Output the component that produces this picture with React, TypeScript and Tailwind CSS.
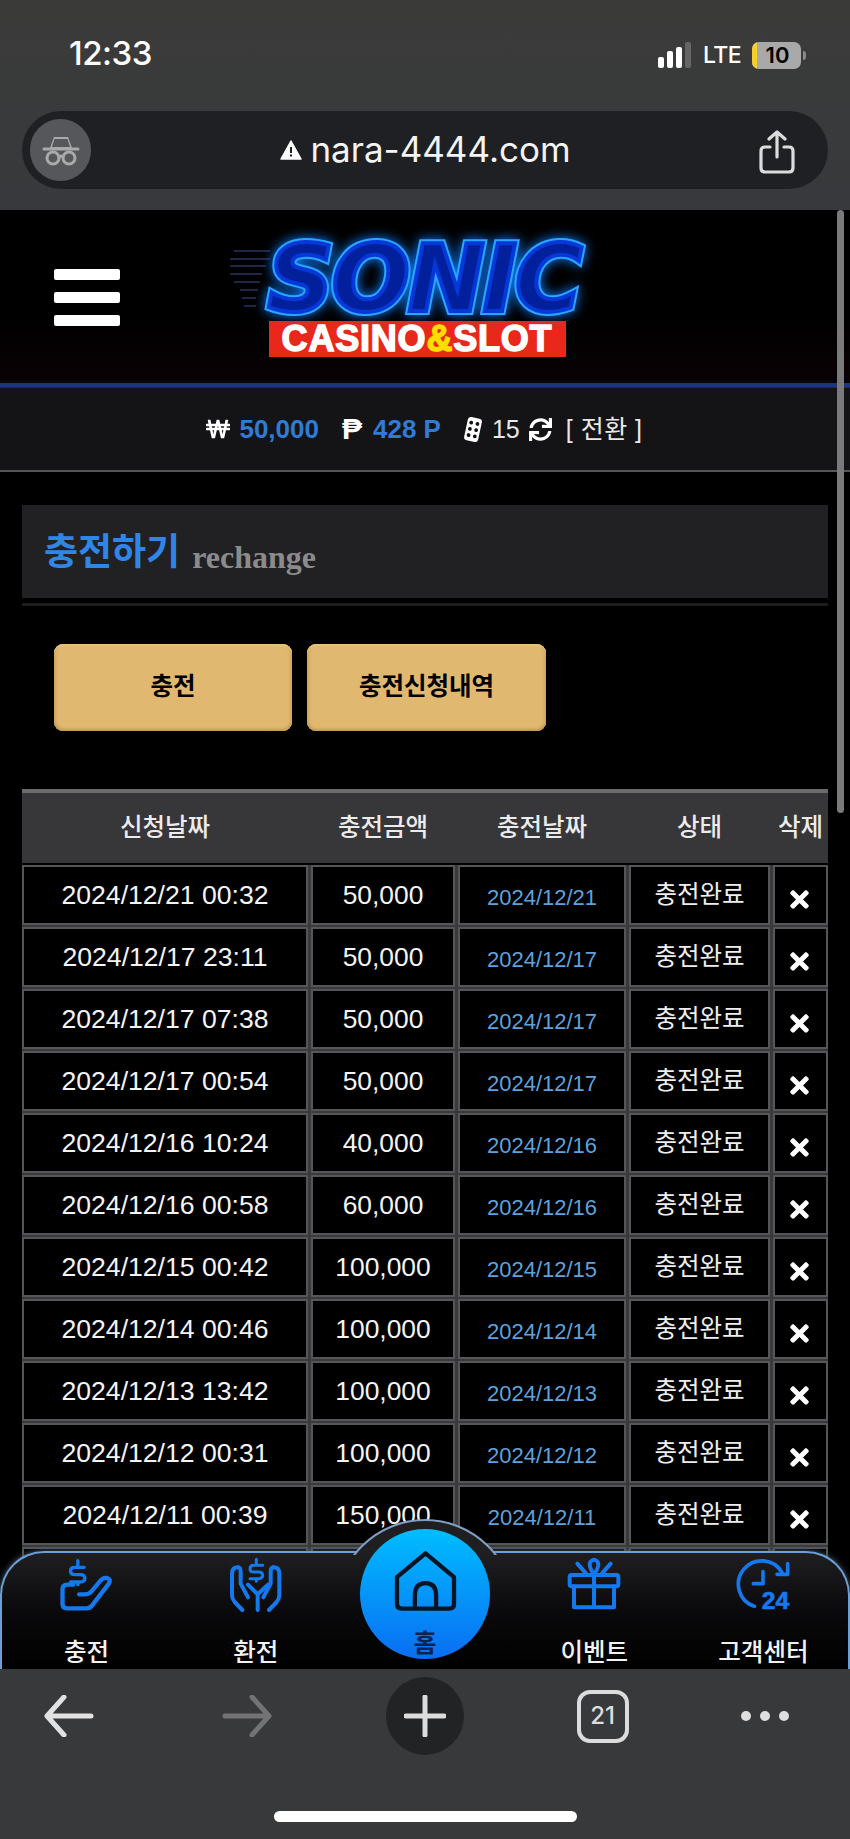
import React from "react";
import { FaTimes, FaWonSign, FaSync } from "react-icons/fa";

const rows: [string, string, string][] = [
  ["2024/12/21 00:32", "50,000", "2024/12/21"],
  ["2024/12/17 23:11", "50,000", "2024/12/17"],
  ["2024/12/17 07:38", "50,000", "2024/12/17"],
  ["2024/12/17 00:54", "50,000", "2024/12/17"],
  ["2024/12/16 10:24", "40,000", "2024/12/16"],
  ["2024/12/16 00:58", "60,000", "2024/12/16"],
  ["2024/12/15 00:42", "100,000", "2024/12/15"],
  ["2024/12/14 00:46", "100,000", "2024/12/14"],
  ["2024/12/13 13:42", "100,000", "2024/12/13"],
  ["2024/12/12 00:31", "100,000", "2024/12/12"],
  ["2024/12/11 00:39", "150,000", "2024/12/11"],
];

const SANS = "font-['Liberation_Sans','Noto_Sans_CJK_KR',sans-serif]";
const COLS = "grid grid-cols-[286px_144px_168px_141px_55px] gap-x-[3px]";
const CELL = "h-[60px] border-2 border-[#565658] bg-black flex items-center justify-center";

function ChargeIcon() {
  return (
    <svg viewBox="80 45 170 165" className="w-[57px] h-[55px]" fill="none" stroke="#1478ee" strokeWidth="13" strokeLinecap="round" strokeLinejoin="round">
      <path d="M125 128 H107 Q93 128 93 141 V186 Q93 199 107 199 H165 Q175 199 182 190 L232 125 Q240 112 226 108 Q215 106 207 116 L180 148 Q172 157 160 157 H143" />
      <path d="M158 76 H130 Q117 76 117 87 Q117 98 130 98 H146 Q160 98 160 109 Q160 120 146 120 H117" strokeWidth="10" />
      <path d="M139 56 V70 M139 122 V128" strokeWidth="10" />
    </svg>
  );
}

function ExchangeIcon() {
  return (
    <svg viewBox="592 45 165 165" className="w-[55px] h-[55px]" fill="none" stroke="#1478ee" strokeWidth="12" strokeLinecap="round" strokeLinejoin="round">
      <path d="M622 76 Q604 76 604 95 V160 Q604 171 612 180 L635 204" />
      <path d="M622 76 Q630 76 630 90 V125 L652 166" />
      <path d="M728 76 Q746 76 746 95 V160 Q746 171 738 180 L715 204" />
      <path d="M728 76 Q720 76 720 90 V125 L698 166" />
      <path d="M681 204 V157 L712 128 M681 157 L652 128" />
      <path d="M696 70 H670 Q658 70 658 80 Q658 90 670 90 H684 Q696 90 696 100 Q696 110 684 110 H658" strokeWidth="9" />
      <path d="M677 52 V64 M677 112 V118" strokeWidth="9" />
    </svg>
  );
}

function GiftIcon() {
  return (
    <svg viewBox="82 48 168 162" className="w-[56px] h-[54px]" fill="none" stroke="#1478ee" strokeWidth="12" strokeLinejoin="round" strokeLinecap="round">
      <rect x="93" y="102" width="146" height="34" rx="6" />
      <path d="M106 136 V199 H226 V136 M166 102 V199" />
      <path d="M166 100 Q148 76 155 63 Q166 50 177 63 Q184 76 166 100 Z" />
      <path d="M116 68 L142 97 M216 68 L190 97" />
    </svg>
  );
}

function ClockIcon() {
  return (
    <svg viewBox="592 48 168 162" className="w-[56px] h-[54px] overflow-visible" fill="none" stroke="#1478ee" strokeWidth="11" strokeLinecap="round" strokeLinejoin="round">
      <path d="M650 196 A70 70 0 1 1 733 95" />
      <path d="M750 68 V100 H718" />
      <path d="M676 92 V128 H647" />
      <text x="672" y="205" fill="#1478ee" stroke="#1478ee" strokeWidth="2" fontFamily="'Liberation Sans',sans-serif" fontWeight="700" fontSize="74">24</text>
    </svg>
  );
}

function HomeIcon() {
  return (
    <svg viewBox="125 125 196 190" className="w-[65px] h-[63px]" fill="none" stroke="#071426" strokeWidth="13" strokeLinecap="round" strokeLinejoin="round">
      <path d="M137 207 L223 135 L309 207 V288 Q309 302 295 302 H151 Q137 302 137 288 Z" />
      <path d="M191 300 V262 Q191 225 223 225 Q255 225 255 262 V300" />
    </svg>
  );
}

function Dice() {
  return (
    <svg viewBox="0 0 24 34" className="w-[20px] h-[27px]">
      <g transform="rotate(12 12 17)">
        <rect x="3" y="2" width="18" height="30" rx="4" fill="#fff" />
        <circle cx="8" cy="9" r="2.4" fill="#111" />
        <circle cx="16" cy="9" r="2.4" fill="#111" />
        <circle cx="8" cy="17" r="2.4" fill="#111" />
        <circle cx="16" cy="17" r="2.4" fill="#111" />
        <circle cx="8" cy="25" r="2.4" fill="#111" />
        <circle cx="16" cy="25" r="2.4" fill="#111" />
      </g>
    </svg>
  );
}

function NavItem({ icon, label }: { icon: React.ReactNode; label: string }) {
  return (
    <div className="flex flex-col items-center">
      <div className="h-[56px] mt-[3px] flex items-center justify-center">{icon}</div>
      <div className="mt-[26px] text-[24.5px] leading-[30px] font-medium text-[#f2f2f2] whitespace-nowrap">{label}</div>
    </div>
  );
}

export default function App() {
  return (
    <div className={`relative w-[850px] h-[1839px] overflow-hidden flex flex-col bg-black ${SANS}`}>
      {/* status + address */}
      <div className="h-[210px] shrink-0 bg-[linear-gradient(180deg,#3a3b39,#38393c)] font-['Inter',sans-serif] text-white">
        <div className="h-[111px] flex items-start justify-between pl-[69px] pr-[44px]">
          <div className="mt-[33px] text-[33px] leading-[40px] font-medium tracking-[-0.5px]">12:33</div>
          <div className="mt-[41px] flex items-center h-[28px]">
            <div className="flex items-end gap-[3px] h-[26px]">
              <div className="w-[6px] h-[11px] rounded-[2px] bg-white" />
              <div className="w-[6px] h-[17px] rounded-[2px] bg-white" />
              <div className="w-[6px] h-[21px] rounded-[2px] bg-white" />
              <div className="w-[6px] h-[26px] rounded-[2px] bg-[#666]" />
            </div>
            <div className="ml-[12px] text-[23px] leading-[28px] font-medium tracking-[-0.6px]">LTE</div>
            <div className="relative ml-[11px] w-[49px] h-[27px] rounded-[7px] bg-[#a9a9a9] overflow-hidden flex items-center justify-center text-black text-[22px] font-semibold">
              <div className="absolute left-0 top-0 bottom-0 w-[5px] bg-[#f5cf2e]" />
              <span className="ml-[2px]">10</span>
            </div>
            <div className="ml-[2px] w-[3px] h-[9px] rounded-r-full bg-[#8a8a8a]" />
          </div>
        </div>
        <div className="mx-[22px] h-[78px] rounded-full bg-[#1f2023] flex items-center relative">
          <div className="ml-[8px] w-[61px] h-[62px] rounded-full bg-[#55575a] flex items-center justify-center">
            <svg viewBox="0 0 40 40" className="w-[40px] h-[40px]" fill="none" stroke="#aaaaaa" strokeWidth="3" strokeLinecap="round" strokeLinejoin="round">
              <path d="M3 19 H37" />
              <path d="M9 18 L13 7 H27 L31 18 Z" fill="#aaaaaa" stroke="none" />
              <path d="M13.5 9 H26.5 L29 17 H11 Z" fill="#55575a" stroke="none" />
              <circle cx="12" cy="28" r="6" />
              <circle cx="28" cy="28" r="6" />
              <path d="M18 27 Q20 25 22 27" />
            </svg>
          </div>
          <div className="flex-1 flex items-center justify-center pr-[70px] ml-[2px]">
            <svg viewBox="0 0 22 20" className="w-[22px] h-[20px] mr-[8px]">
              <path d="M11 1 L21 19 H1 Z" fill="#fff" stroke="#fff" strokeWidth="1.5" strokeLinejoin="round" />
              <rect x="10" y="7" width="2" height="6" fill="#1f2023" />
              <rect x="10" y="14.5" width="2" height="2" fill="#1f2023" />
            </svg>
            <div className="text-[35px] leading-[44px] mt-[-2px] text-[#f4f4f4]">nara-4444.com</div>
          </div>
          <svg viewBox="0 0 36 44" className="absolute right-[33px] top-[19px] w-[36px] h-[44px]" fill="none" stroke="#dcdcdc" strokeWidth="3.2" strokeLinecap="round" strokeLinejoin="round">
            <path d="M18 2 V27 M10 9 L18 2 L26 9" />
            <path d="M11 17 H6 Q2 17 2 21 V38 Q2 42 6 42 H30 Q34 42 34 38 V21 Q34 17 30 17 H25" />
          </svg>
        </div>
      </div>

      {/* web content */}
      <div className="relative flex-1 overflow-hidden bg-black">
        <div className="h-[173px] flex items-start pl-[54px] bg-[linear-gradient(180deg,#000_60%,#0a0204_100%)]">
          <div className="mt-[59px] flex flex-col gap-[12px]">
            <div className="w-[66px] h-[11px] rounded-[2px] bg-white" />
            <div className="w-[66px] h-[11px] rounded-[2px] bg-white" />
            <div className="w-[66px] h-[11px] rounded-[2px] bg-white" />
          </div>
          <div className="relative ml-[138px] mt-[35px] w-[332px] flex flex-col items-center">
            <svg viewBox="0 0 40 66" className="absolute left-[-28px] top-[4px] w-[40px] h-[66px]" stroke="#3f4d8c" strokeWidth="1">
              <path d="M4 2 H40 M0 10 H40 M0 17 H36 M0 25 H32 M4 33 H30 M10 41 H28 M12 49 H26 M14 57 H26" />
            </svg>
            <div className="relative isolate h-[70px] w-[332px] flex items-center justify-center [filter:drop-shadow(0_0_6px_#0a7cff)]">
              <div className="relative font-['DejaVu_Sans',sans-serif] font-bold italic text-[92px] leading-[70px] tracking-[-2px] whitespace-nowrap text-[#021f9c] [-webkit-text-stroke:4px_#0438d8] before:content-['SONIC'] before:absolute before:left-0 before:top-0 before:-z-10 before:text-[#2ba6ff] before:[-webkit-text-stroke:8px_#2ba6ff]">
                SONIC
              </div>
            </div>
            <div className="mt-[6px] ml-[-14px] w-[297px] h-[36px] bg-[#e8281b] flex items-center justify-center text-[36px] leading-[36px] font-bold text-white tracking-[0.8px] [-webkit-text-stroke:1.5px_#fff]">
              CASINO<span className="text-[#ffdd00] [-webkit-text-stroke:1.5px_#ffdd00]">&amp;</span>SLOT
            </div>
          </div>
        </div>
        <div className="h-[4px] bg-[#1c3580]" />

        <div className="h-[85px] bg-[#141416] border-t border-[#2c2c2e] border-b-2 border-b-[#565658] flex items-center justify-center pr-[1px] text-[#e8e8e8]">
          <FaWonSign className="w-[24px] h-[22px] text-white" />
          <span className="ml-[9px] text-[26px] leading-[30px] font-bold text-[#2f7bd6]">50,000</span>
          <span className="ml-[23px] text-[30px] leading-[30px] font-bold text-white">₱</span>
          <span className="ml-[11px] text-[26px] leading-[30px] font-bold text-[#2f7bd6]">428 P</span>
          <span className="ml-[22px] flex items-center"><Dice /></span>
          <span className="ml-[9px] text-[25px] leading-[30px]">15</span>
          <FaSync className="ml-[9px] w-[23px] h-[23px] text-white" />
          <span className="ml-[14px] text-[25px] leading-[30px] tracking-[0.5px]">[ 전환 ]</span>
        </div>

        <div className="px-[22px]">
          <div className="mt-[33px] h-[93px] bg-[#212023] flex items-center pl-[22px] pt-[2px]">
            <span className="text-[37px] leading-[44px] font-bold text-[#2f86e8]">충전하기</span>
            <span className="ml-[12px] mt-[9px] font-['Liberation_Serif',serif] text-[32px] leading-[44px] font-bold text-[#8b8b8b]">rechange</span>
          </div>
          <div className="mt-[5px] h-[3px] bg-[#1c1b1e]" />

          <div className="mt-[38px] pl-[32px] flex gap-[15px]">
            <div className="w-[238px] h-[87px] rounded-[9px] bg-[#e1b86f] shadow-[inset_0_-2px_3px_#c49a52,inset_0_2px_2px_#eac483,inset_-2px_0_3px_#d0a862,inset_2px_0_3px_#d0a862] flex items-center justify-center text-[24.5px] font-bold text-black">
              충전
            </div>
            <div className="w-[239px] h-[87px] rounded-[9px] bg-[#e1b86f] shadow-[inset_0_-2px_3px_#c49a52,inset_0_2px_2px_#eac483,inset_-2px_0_3px_#d0a862,inset_2px_0_3px_#d0a862] flex items-center justify-center text-[24.5px] font-bold text-black">
              충전신청내역
            </div>
          </div>

          <div className="mt-[58px] h-[4px] bg-[#6b6b6d]" />
          <div className={`${COLS} h-[70px] bg-[#373639] items-center text-center text-[24.5px] font-medium text-[#ececec]`}>
            <div>신청날짜</div>
            <div>충전금액</div>
            <div>충전날짜</div>
            <div>상태</div>
            <div>삭제</div>
          </div>

          <div className="mt-[2px] flex flex-col gap-y-[2px] bg-[#3a3a3c]">
            {rows.map((r) => (
              <div key={r[0]} className={COLS}>
                <div className={`${CELL} pt-[2px] text-[26.6px] text-[#f4f4f4]`}>{r[0]}</div>
                <div className={`${CELL} pt-[2px] text-[26.4px] text-[#f4f4f4]`}>{r[1]}</div>
                <div className={`${CELL} pt-[4px] text-[22px] text-[#5ea2dc]`}>{r[2]}</div>
                <div className={`${CELL} pt-[1px] text-[24.5px] text-[#eeeeee]`}>충전완료</div>
                <div className={`${CELL} pt-[8px] pr-[2px] text-white`}><FaTimes className="w-[23px] h-[27px]" /></div>
              </div>
            ))}
            <div className={COLS}>
              <div className={CELL} />
              <div className={CELL} />
              <div className={CELL} />
              <div className={CELL} />
              <div className={CELL} />
            </div>
          </div>
        </div>

        {/* page scrollbar */}
        <div className="absolute right-[6px] top-0 h-[603px] w-[7px] rounded-full bg-[#7a7a7c]" />

        {/* bottom navigation */}
        <div className="absolute left-0 right-0 bottom-0 h-[118px]">
          <div className="absolute left-1/2 -translate-x-1/2 top-[-32px] w-[190px] h-[36px] overflow-hidden z-10">
            <div className="absolute left-[5px] top-0 w-[180px] h-[180px] rounded-full border-2 border-[#7f9fc4] bg-[#1f1f21]" />
          </div>
          <div className="h-full grid grid-cols-5 rounded-t-[44px] border-x-2 border-t-2 border-[#6c9fd6] bg-[linear-gradient(180deg,#1f1f21_0%,#0a0a0c_50%,#000_100%)] shadow-[0_0_6px_#4a5a6a]">
            <NavItem icon={<ChargeIcon />} label="충전" />
            <NavItem icon={<ExchangeIcon />} label="환전" />
            <div />
            <NavItem icon={<GiftIcon />} label="이벤트" />
            <NavItem icon={<ClockIcon />} label="고객센터" />
          </div>
          <div className="absolute z-20 left-1/2 -translate-x-1/2 top-[-22px] w-[130px] h-[130px] rounded-full bg-[linear-gradient(180deg,#00bdff_0%,#0a6ef2_100%)] flex flex-col items-center">
            <div className="mt-[21px]"><HomeIcon /></div>
            <div className="mt-[17px] text-[25px] leading-[26px] font-bold text-[#0a2450]">홈</div>
          </div>
        </div>
      </div>

      {/* browser toolbar */}
      <div className="relative h-[170px] shrink-0 bg-[#38393b]">
        <div className="h-[94px] grid grid-cols-5 font-['Inter',sans-serif]">
          <div className="flex items-center justify-center pr-[32px]">
            <svg viewBox="0 0 50 42" className="w-[50px] h-[42px]" fill="none" stroke="#e2e2e2" strokeWidth="5" strokeLinecap="round" strokeLinejoin="round">
              <path d="M3 21 H47 M20 2 L3 21 L20 40" />
            </svg>
          </div>
          <div className="flex items-center justify-center pr-[16px]">
            <svg viewBox="0 0 50 42" className="w-[50px] h-[42px]" fill="none" stroke="#737375" strokeWidth="5" strokeLinecap="round" strokeLinejoin="round">
              <path d="M47 21 H3 M30 2 L47 21 L30 40" />
            </svg>
          </div>
          <div className="flex items-center justify-center">
            <div className="w-[78px] h-[78px] rounded-full bg-[#222325] flex items-center justify-center">
              <svg viewBox="0 0 42 42" className="w-[42px] h-[42px]" fill="none" stroke="#dcdcdc" strokeWidth="5" strokeLinecap="round">
                <path d="M21 2 V40 M2 21 H40" />
              </svg>
            </div>
          </div>
          <div className="flex items-center justify-center pl-[15px]">
            <div className="w-[52px] h-[53px] rounded-[13px] border-[4px] border-[#dcdcdc] flex items-center justify-center text-[24px] font-medium text-[#dcdcdc]">21</div>
          </div>
          <div className="flex items-center justify-center gap-[9px]">
            <div className="w-[10px] h-[10px] rounded-full bg-[#dedede]" />
            <div className="w-[10px] h-[10px] rounded-full bg-[#dedede]" />
            <div className="w-[10px] h-[10px] rounded-full bg-[#dedede]" />
          </div>
        </div>
        <div className="mx-auto mt-[48px] w-[303px] h-[11px] rounded-full bg-white" />
      </div>
    </div>
  );
}
